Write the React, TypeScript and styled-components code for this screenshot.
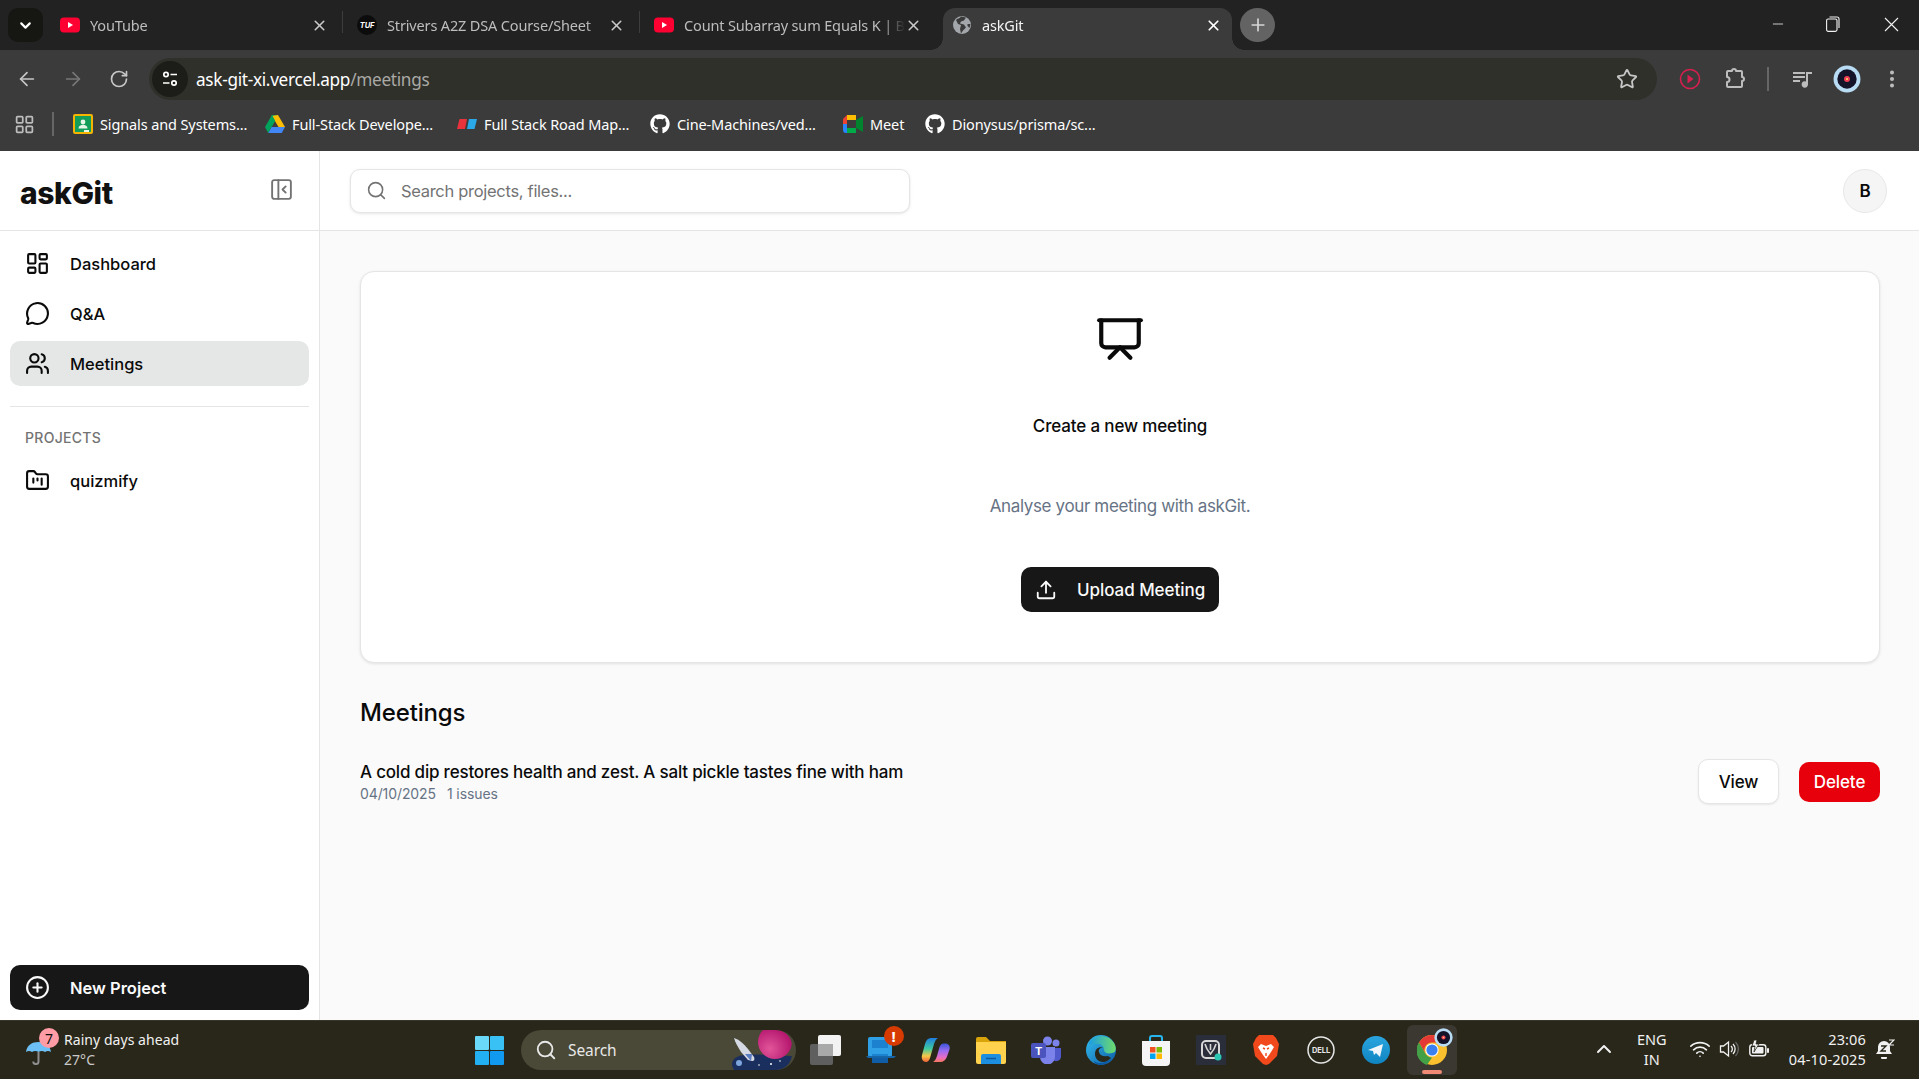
import React from 'react';
import styled, { createGlobalStyle } from 'styled-components';
import {
  ArrowLeft, ArrowRight, RotateCw, X, Plus, ChevronDown, ChevronUp, LayoutGrid, Star,
  MoreVertical, Minus, LayoutDashboard, MessageCircle, Users, FolderKanban, PanelLeftClose, Search as SearchIcon,
  Presentation, Upload, CirclePlus, Wifi,
} from 'lucide-react';
import { FaGithub } from 'react-icons/fa';

const Global = createGlobalStyle`
  html, body { margin: 0; padding: 0; height: 100%; overflow: hidden; }
  * { box-sizing: border-box; }
  #root { height: 100%; }
`;

const chromeFont = `"Noto Sans", "Open Sans", sans-serif`;

const Shell = styled.div`
  display: flex; flex-direction: column; width: 100%; height: 100vh;
  font-family: Inter, "Noto Sans", sans-serif; color: #0a0a0a;
`;

/* ---------- browser chrome ---------- */
const TabStrip = styled.div`
  flex: none; height: 50px; background: #222222; display: flex; align-items: flex-end; padding-left: 8px;
  font-family: ${chromeFont};
`;
const TabListButton = styled.div`
  flex: none; width: 35px; height: 34px; margin: 0 3px 8px 0; border-radius: 10px; background: #161613;
  display: flex; align-items: center; justify-content: center; color: #fff;
`;
const Tab = styled.div<{ $active?: boolean }>`
  flex: none; height: 42px; display: flex; align-items: center; font-size: 14.5px; letter-spacing: -0.15px; position: relative;
  width: ${p => (p.$active ? '289px' : '296px')};
  margin-left: ${p => (p.$active ? '7px' : '0')};
  padding: ${p => (p.$active ? '0 10px 8px 9px' : '0 14px 8px')};
  color: ${p => (p.$active ? '#f4f4f4' : '#bdbdbd')};
  background: ${p => (p.$active ? '#3b3b3b' : 'transparent')};
  border-radius: 12px 12px 0 0;
  svg.close { color: ${p => (p.$active ? '#fff' : '#c9c9c9')}; flex: none; }
  ${p => p.$active && `
    &::before, &::after { content: ''; position: absolute; bottom: 0; width: 12px; height: 12px; }
    &::before { left: -12px; background: radial-gradient(circle at 0 0, transparent 11.5px, #3b3b3b 12px); }
    &::after { right: -12px; background: radial-gradient(circle at 100% 0, transparent 11.5px, #3b3b3b 12px); }
  `}
`;
const TabTitle = styled.span`
  flex: 1; min-width: 0; margin-left: 10px; white-space: nowrap; overflow: hidden;
  -webkit-mask-image: linear-gradient(90deg, #000 90%, transparent 100%);
  mask-image: linear-gradient(90deg, #000 90%, transparent 100%);
`;
const TabSeparator = styled.div`
  flex: none; width: 1px; height: 22px; margin-bottom: 17px; background: #3d3d3d;
`;
const NewTab = styled.div`
  flex: none; width: 35px; height: 34px; margin: 0 0 8px 8px; border-radius: 50%; background: #636363;
  display: flex; align-items: center; justify-content: center; color: #d6d6d6;
`;
const WindowControls = styled.div`
  margin-left: auto; display: flex; height: 50px; color: #f2f2f2;
`;
const WindowButton = styled.div<{ $close?: boolean }>`
  width: 55.5px; display: flex; align-items: center; justify-content: center; padding-bottom: 2px;
  margin-left: ${p => (p.$close ? '2.5px' : '0')};
`;
const Toolbar = styled.div`
  flex: none; height: 50px; padding-top: 8px; background: #3b3b3b; display: flex;
  align-items: stretch; padding-left: 4px; font-family: ${chromeFont};
`;
const NavButton = styled.div<{ $dim?: boolean }>`
  flex: none; width: 46px; display: flex; align-items: center; justify-content: center;
  color: ${p => (p.$dim ? '#787878' : '#c7c7c7')};
`;
const Omnibox = styled.div`
  flex: none; width: 1508px; margin: 0 10px 0 7px; height: 42px; background: #30302b; border-radius: 21px;
  display: flex; align-items: center; padding: 0 19px 0 3px;
`;
const SiteChip = styled.div`
  flex: none; width: 36px; height: 36px; border-radius: 50%; background: #1c1c18;
  display: flex; align-items: center; justify-content: center;
`;
const Url = styled.span`
  margin-left: 8px; font-size: 17.2px; letter-spacing: -0.3px; color: #fff; white-space: nowrap;
  span { color: #a9a9a5; }
`;
const UrlStar = styled.div`
  margin-left: auto; display: flex; color: #c7c7c7;
`;
const ToolButton = styled.div`
  flex: none; width: 45px; height: 42px; display: flex; align-items: center; justify-content: center; color: #bdbdbd;
`;
const ToolSeparator = styled.div`
  flex: none; width: 22px; height: 42px; display: flex; align-items: center; justify-content: center;
  &::before { content: ''; width: 2px; height: 24px; background: #666; }
`;
const BookmarkBar = styled.div`
  flex: none; height: 51px; background: #3b3b3b; display: flex; align-items: center; padding: 0 0 3px 14px;
  font-family: ${chromeFont}; font-size: 14.5px; letter-spacing: -0.12px; color: #fff;
`;
const AppsButton = styled.div`
  flex: none; display: flex; width: 21px; color: #bdbdbd;
`;
const BarDivider = styled.div`
  flex: none; width: 2px; height: 24px; background: #666; margin: 0 19px 0 17px;
`;
const Bookmark = styled.div<{ $width: number }>`
  flex: none; width: ${p => p.$width}px; display: flex; align-items: center; gap: 7px; white-space: nowrap;
`;
const Favicon = styled.svg`
  flex: none; display: block;
`;

/* ---------- app ---------- */
const Main = styled.div`
  flex: 1; min-height: 0; display: flex; background: #fff;
`;
const Sidebar = styled.aside`
  flex: none; width: 320px; display: flex; flex-direction: column; background: #fff; border-right: 1px solid #e5e5e5;
`;
const SidebarHeader = styled.div`
  flex: none; height: 80px; border-bottom: 1px solid #e5e5e5; display: flex; align-items: center;
  justify-content: space-between; padding: 0 24px 0 20px;
`;
const Logo = styled.div`
  font-size: 30px; font-weight: 800; letter-spacing: -0.4px; color: #111; padding-top: 4px;
`;
const CollapseButton = styled.div`
  display: flex; color: #737373; margin-right: 1px; margin-top: -3px;
`;
const NavList = styled.nav`
  display: flex; flex-direction: column; gap: 5px; padding: 10px 10px 0;
`;
const NavItem = styled.div<{ $active?: boolean }>`
  height: 45px; border-radius: 10px; display: flex; align-items: center; gap: 20px; padding-left: 15px;
  font-size: 16.5px; font-weight: 500; color: #0a0a0a;
  background: ${p => (p.$active ? '#e5e6e6' : 'transparent')};
`;
const SideDivider = styled.div`
  height: 1px; background: #e5e5e5; margin: 20px 10px 0;
`;
const SectionLabel = styled.div`
  margin: 20px 0 0 25px; height: 21px; line-height: 21px; font-size: 14px; font-weight: 500; letter-spacing: 0.3px; color: #737373;
`;
const ProjectList = styled.div`
  padding: 10px 10px 0;
`;
const NewProject = styled.button`
  margin: auto 10px 10px; height: 45px; border: 0; border-radius: 10px; background: #171717; color: #fafafa;
  display: flex; align-items: center; gap: 20px; padding: 0 0 0 15px; font: 600 16.5px Inter, sans-serif; letter-spacing: 0;
`;
const Page = styled.div`
  flex: 1; min-width: 0; display: flex; flex-direction: column; background: #fafafa;
`;
const PageHeader = styled.header`
  flex: none; height: 80px; background: #fff; border-bottom: 1px solid #e5e5e5; display: flex; align-items: center;
  justify-content: space-between; padding: 0 32px 0 30px;
`;
const SearchBox = styled.div`
  width: 560px; height: 44px; border: 1px solid #e5e5e5; border-radius: 10px; background: #fff;
  box-shadow: 0 1px 3px rgba(0,0,0,.1); display: flex; align-items: center; gap: 14px; padding-left: 15px;
  color: #737373; font-size: 16.5px; letter-spacing: -0.3px;
`;
const Avatar = styled.div`
  width: 44px; height: 44px; border-radius: 50%; background: #f5f5f5; border: 1px solid #e8e8e8;
  display: flex; align-items: center; justify-content: center; font-size: 17px; font-weight: 600;
`;
const Content = styled.main`
  flex: 1; padding: 40px 39px 0 40px;
`;
const UploadCard = styled.section`
  height: 392px; border: 1px solid #e5e5e5; border-radius: 14px; background: #fff; box-shadow: 0 1px 3px rgba(0,0,0,.1);
  display: flex; flex-direction: column; align-items: center; padding-top: 42px;
`;
const CardTitle = styled.h2`
  margin: 51px 0 0; font-size: 17px; line-height: 22px; font-weight: 500; letter-spacing: -0.15px;
`;
const CardText = styled.p`
  margin: 58px 0 0; font-size: 17px; line-height: 22px; font-weight: 400; color: #667385; letter-spacing: -0.36px;
`;
const UploadButton = styled.button`
  margin-top: 50px; width: 198px; height: 45px; border: 0; border-radius: 10px; background: #171717; color: #fafafa;
  display: flex; align-items: center; gap: 20px; padding: 0 0 0 14px; font: 500 17px Inter, sans-serif; letter-spacing: -0.05px;
`;
const SectionTitle = styled.h1`
  margin: 34px 0 0; font-size: 24px; line-height: 32px; font-weight: 500; letter-spacing: -0.15px;
`;
const MeetingRow = styled.div`
  margin-top: 30px; display: flex; justify-content: space-between; align-items: flex-start;
`;
const MeetingInfo = styled.div`
  padding-top: 2px;
`;
const MeetingTitle = styled.div`
  font-size: 17px; line-height: 22px; font-weight: 500; letter-spacing: -0.2px;
`;
const MeetingMeta = styled.div`
  display: flex; gap: 11px; font-size: 14px; line-height: 22px; color: #667385; letter-spacing: -0.1px;
`;
const Actions = styled.div`
  display: flex; align-items: center; gap: 20px;
`;
const ActionButton = styled.button<{ $danger?: boolean }>`
  border-radius: 10px; font: 500 17px Inter, sans-serif; letter-spacing: -0.1px;
  width: ${p => (p.$danger ? '81px' : '81px')};
  height: ${p => (p.$danger ? '40px' : '45px')};
  color: ${p => (p.$danger ? '#fff' : '#0a0a0a')};
  background: ${p => (p.$danger ? '#e7000b' : '#fff')};
  border: ${p => (p.$danger ? '0' : '1px solid #e5e5e5')};
  box-shadow: ${p => (p.$danger ? 'none' : '0 1px 2px rgba(0,0,0,.08)')};
`;

/* ---------- taskbar ---------- */
const Taskbar = styled.footer`
  flex: none; height: 59px; background: #29271a; border-top: 1px solid #38362a; display: flex; align-items: center;
  font-family: ${chromeFont}; color: #f1f1f1; font-size: 14px; letter-spacing: -0.1px;
`;
const Weather = styled.div`
  flex: none; width: 462px; display: flex; align-items: center; padding-left: 26px; position: relative;
`;
const WeatherBadge = styled.span`
  position: absolute; left: 39px; top: -2px; width: 20px; height: 20px; border-radius: 50%; background: #ff9ca6; color: #111;
  display: flex; align-items: center; justify-content: center; font-size: 14px;
`;
const WeatherText = styled.div`
  margin-left: 13px; line-height: 20px; font-size: 14px; letter-spacing: 0.05px;
  small { display: block; font-size: 14px; color: #c9c9c9; }
`;
const UmbrellaSlot = styled.div`
  flex: none; display: flex; margin-top: 5px;
`;
const TaskIcon = styled.div<{ $active?: boolean }>`
  flex: none; width: 55px; height: 50px; display: flex; align-items: center; justify-content: center; position: relative;
  ${p => p.$active && 'background: #3a3830; border-radius: 6px; width: 50px; margin: 0 2px 0 3px;'}
`;
const ActivePill = styled.span`
  position: absolute; left: 15px; bottom: 1px; width: 20px; height: 4px; border-radius: 2px; background: #f08a74;
`;
const AlertBadge = styled.span`
  position: absolute; left: 30px; top: 1px; width: 20px; height: 20px; border-radius: 50%; background: #d83b01; color: #fff;
  display: flex; align-items: center; justify-content: center; font-size: 15px; font-weight: 700;
`;
const TaskSearch = styled.div`
  flex: none; width: 275px; height: 40px; margin: 0 2.5px 0 4px; border-radius: 20px; background: #4a4836; display: flex; align-items: center;
  padding: 0 4px 0 14px; gap: 11px; font-size: 15.5px; color: #e8e8e8; overflow: hidden;
`;
const SearchArt = styled.svg`
  margin-left: auto; flex: none; display: block; border-radius: 0 16px 16px 0;
`;
const Tray = styled.div`
  margin-left: auto; display: flex; align-items: center; padding: 0 24px 2px 0; font-size: 14.5px;
`;
const LangBlock = styled.div`
  margin-left: 20px; width: 32px; text-align: center; line-height: 20px; letter-spacing: 0;
`;
const TrayIcon = styled.div<{ $gap: number }>`
  margin-left: ${p => p.$gap}px; display: flex;
`;
const Clock = styled.div`
  margin-left: 20px; text-align: right; line-height: 20px; letter-spacing: 0.15px; white-space: nowrap;
`;

/* ---------- drawings ---------- */
const YouTubeIcon = () => (
  <Favicon width="20" height="16" viewBox="0 0 20 16"><rect y="0.5" width="20" height="15" rx="4" fill="#ff0033" /><path d="M8 5l5 3-5 3z" fill="#fff" /></Favicon>
);
const TufIcon = () => (
  <Favicon width="20" height="20" viewBox="0 0 20 20"><circle cx="10" cy="10" r="10" fill="#0c0c0c" /><text x="10" y="12.5" textAnchor="middle" fontSize="7.5" fontStyle="italic" fontWeight="700" fill="#fff" fontFamily="Inter">TUF</text></Favicon>
);
const GlobeIcon = () => (
  <Favicon width="20" height="20" viewBox="0 0 20 20"><circle cx="10" cy="10" r="9" fill="#a3a7ab" /><path d="M9 1.5c-1 2-4 2-5 3.5l2 4 3 1-1 4 1 4.5 2-3 3-3-2-3-4-1 1-2 3-1 2-3zM15.5 9l3 0-1 4-2-2z" fill="#3b3b3b" /></Favicon>
);
const SiteInfoIcon = () => (
  <Favicon width="20" height="20" viewBox="0 0 20 20" fill="none" stroke="#fff" strokeWidth="1.7"><circle cx="6" cy="5.5" r="2.2" /><path d="M10.5 5.5H17M3 14h6.5" /><circle cx="14" cy="14" r="2.2" /></Favicon>
);
const ClassroomIcon = () => (
  <Favicon width="20" height="20" viewBox="0 0 20 20"><rect width="20" height="20" rx="2" fill="#f4b400" /><rect x="2" y="2" width="16" height="16" fill="#129d58" /><circle cx="10" cy="8" r="2.4" fill="#e8f5e9" /><path d="M5.5 14.5c0-5 9-5 9 0z" fill="#e8f5e9" /><path d="M11 16h5v2h-5z" fill="#e8f5e9" /></Favicon>
);
const DriveIcon = () => (
  <Favicon width="20" height="18" viewBox="0 0 20 18"><path d="M7 0h6l-3 6-3 5.5L4 6z" fill="#0f9d58" /><path d="M13 0l7 12h-6.5L7 1z" fill="#fbbc04" /><path d="M20 12l-3.2 6H3.2l3.3-6z" fill="#4285f4" /><path d="M7 0l3 5.5L3.2 18 0 12z" fill="#00a35c" /></Favicon>
);
const RoadmapIcon = () => (
  <Favicon width="20" height="10" viewBox="0 0 20 10"><path d="M2.5 0H10L8 10H0z" fill="#e8323c" /><path d="M12 0h8l-2.5 10H10z" fill="#2ba8e8" /></Favicon>
);
const MeetIcon = () => (
  <Favicon width="20" height="18" viewBox="0 0 20 18"><path d="M4 0h9v5H4v4H0V4z" fill="#ea4335" /><path d="M0 9h4v4h9v5H3a3 3 0 0 1-3-3z" fill="#2684fc" /><path d="M4 0h9v5H4z" fill="#fbbc04" /><path d="M13 13H4v5h9z" fill="#00ac47" /><path d="M13 5v8l7 4V1z" fill="#00832d" /><path d="M4 5h9v8H4z" fill="#3b3b3b" /></Favicon>
);
const GitHubIcon = () => <FaGithub size={20} color="#fff" />;
const PlayRingIcon = () => (
  <Favicon width="22" height="22" viewBox="0 0 22 22" fill="none"><circle cx="11" cy="11" r="9.5" stroke="#d81f4f" strokeWidth="1.6" /><path d="M8.5 6.5l6 4.5-6 4.5z" fill="#d81f4f" /></Favicon>
);
const ExtensionIcon = () => (
  <Favicon width="24" height="24" viewBox="0 0 24 24" fill="none" stroke="#bdbdbd" strokeWidth="2" strokeLinejoin="round"><path d="M9 4a2 2 0 0 1 4 0h5a1 1 0 0 1 1 1v5a2 2 0 0 1 0 4v5a1 1 0 0 1-1 1H5a1 1 0 0 1-1-1v-4a2.5 2.5 0 0 0 0-5V5a1 1 0 0 1 1-1z" /></Favicon>
);
const MediaIcon = () => (
  <Favicon width="24" height="24" viewBox="0 0 24 24" fill="#bdbdbd"><path d="M3 5h12v2H3zM3 9h12v2H3zM3 13h7v2H3z" /><path d="M16 5h6v2h-4v10.5a3.2 3.2 0 1 1-2-3z" /></Favicon>
);
const ProfileIcon = ({ size = 28 }: { size?: number }) => (
  <Favicon width={size} height={size} viewBox="0 0 26 26"><circle cx="13" cy="13" r="12.5" fill="#b9dcf5" /><circle cx="13" cy="13" r="9" fill="#15132a" /><circle cx="13" cy="13" r="2.8" fill="#ef3e55" /><circle cx="13" cy="13" r="1" fill="#ffd166" /></Favicon>
);
const RestoreIcon = () => (
  <Favicon width="14" height="16" viewBox="0 0 14 16" fill="none" stroke="#f2f2f2" strokeWidth="1.1"><rect x="0.6" y="3" width="10.4" height="12.4" rx="1.6" /><path d="M3.5 1h7.5a2 2 0 0 1 2 2v9" /></Favicon>
);
const ThinClose = () => (
  <Favicon width="15" height="15" viewBox="0 0 15 15" stroke="#f2f2f2" strokeWidth="1.1"><path d="M1 1l13 13M14 1L1 14" /></Favicon>
);
const UmbrellaIcon = () => (
  <Favicon width="25" height="24" viewBox="0 0 25 24"><path d="M0 11C1 4 6 1 12.5 1S24 4 25 11c-2-1.5-4-1.5-6 0-2-1.5-4.5-1.5-6.5 0-2-1.5-4.5-1.5-6.5 0-2-1.5-4-1.5-6 0z" fill="#6cc0f5" /><path d="M12.5 11v9.5a2.6 2.6 0 0 1-5.2 0" fill="none" stroke="#8d8d8d" strokeWidth="2" /></Favicon>
);
const WindowsLogo = () => (
  <Favicon width="29" height="29" viewBox="0 0 29 29"><rect width="14" height="14" rx="1" fill="#6ad8f8" /><rect x="15" width="14" height="14" rx="1" fill="#39c0f5" /><rect y="15" width="14" height="14" rx="1" fill="#23b0f3" /><rect x="15" y="15" width="14" height="14" rx="1" fill="#1099ef" /></Favicon>
);
const SearchArtIcon = () => (
  <SearchArt width="62" height="40" viewBox="0 0 62 40">
    <defs><radialGradient id="pl" cx=".35" cy=".7" r=".9"><stop offset="0" stopColor="#e2559a" /><stop offset=".7" stopColor="#b5176e" /><stop offset="1" stopColor="#8c1458" /></radialGradient></defs>
    <path d="M4 40c-5-8 0-14 10-15 14-1 30 0 48 1v14z" fill="#1b2f5f" />
    <circle cx="45" cy="12" r="17" fill="url(#pl)" />
    <path d="M4 8c6 2 10 6 14 11l6 8c1 3 0 4-2 4l-4-1-7-8C8 17 5 12 4 8z" fill="#d5d9e3" />
    <path d="M15 24l6 7 1-7z" fill="#5a7cc0" />
    <circle cx="9" cy="33" r="3" fill="#7ea6dc" />
    <circle cx="41" cy="34" r="1" fill="#fff" /><circle cx="50" cy="31" r="0.8" fill="#fff" /><circle cx="29" cy="35" r="0.8" fill="#fff" />
  </SearchArt>
);
const TaskViewIcon = () => (
  <Favicon width="32" height="30" viewBox="0 0 32 30"><rect y="9" width="23" height="21" rx="2" fill="#5f5f5f" /><rect x="8" y="0" width="23" height="21" rx="2" fill="#f3f3f3" /><rect x="8" y="9" width="15" height="12" fill="#a9a9a9" /></Favicon>
);
const WidgetsIcon = () => (
  <Favicon width="30" height="28" viewBox="0 0 30 28"><rect x="2" y="1" width="24" height="20" rx="2" fill="#2f9fe6" /><path d="M6 4h16v20a2 2 0 0 1-2 2H8a2 2 0 0 1-2-2z" fill="#1c82d0" /><path d="M6 12h16v6H6z" fill="#2f9fe6" /><path d="M0 20h30l-2 2H2z" fill="#1565a8" /><path d="M6 22h16v5H6z" fill="#0f5da6" /></Favicon>
);
const CopilotIcon = () => (
  <Favicon width="30" height="30" viewBox="0 0 30 30"><defs><linearGradient id="c1" x1="0" y1="0" x2="0" y2="1"><stop offset="0" stopColor="#1f7ee0" /><stop offset=".45" stopColor="#3fc9a0" /><stop offset=".75" stopColor="#f7c948" /><stop offset="1" stopColor="#f0603c" /></linearGradient><linearGradient id="c2" x1="0" y1="0" x2="0" y2="1"><stop offset="0" stopColor="#3a55d8" /><stop offset=".4" stopColor="#9a6cf0" /><stop offset=".75" stopColor="#e86cc4" /><stop offset="1" stopColor="#f7785c" /></linearGradient></defs><path d="M10 3h7c-2 1-3 3-4 6l-4 14c-.5 2-2 4-4 4-3 0-5-3-4-7l3-11c1-4 3-6 6-6z" fill="url(#c1)" /><path d="M19 27h-7c2-1 3-3 4-6l2.5-9c1-2 2-3.5 4-3.5h2c3 0 5 2.5 4 6l-2.5 7c-1 3.500-3.500 5.500-7 5.500z" fill="url(#c2)" /></Favicon>
);
const ExplorerIcon = () => (
  <Favicon width="30" height="28" viewBox="0 0 30 28"><path d="M0 3a2 2 0 0 1 2-2h8l4 4h16v4H0z" fill="#d9a40a" /><path d="M0 6h30v20a2 2 0 0 1-2 2H2a2 2 0 0 1-2-2z" fill="#ffd24d" /><path d="M5 20a2 2 0 0 1 2-2h16a2 2 0 0 1 2 2v8H5z" fill="#1d8fe1" /><path d="M10 22.500h10" stroke="#0c5a9c" strokeWidth="1.5" /></Favicon>
);
const TeamsIcon = () => (
  <Favicon width="30" height="28" viewBox="0 0 30 28"><circle cx="25" cy="7" r="3.5" fill="#7b83eb" /><circle cx="16.5" cy="5" r="4.5" fill="#7b83eb" /><path d="M21 12h9v9a5 5 0 0 1-9 2z" fill="#5059c9" /><path d="M9 11h15v10a7 7 0 0 1-15 0z" fill="#7b83eb" /><rect y="7" width="15" height="15" rx="2" fill="#4b53bc" /><text x="7.5" y="18.5" textAnchor="middle" fontSize="11" fontWeight="700" fill="#fff" fontFamily="Inter">T</text></Favicon>
);
const EdgeIcon = () => (
  <Favicon width="30" height="30" viewBox="0 0 30 30"><defs><linearGradient id="e1" x1="0" y1="0" x2="1" y2="1"><stop offset="0" stopColor="#35c1f1" /><stop offset="1" stopColor="#0c59a4" /></linearGradient><linearGradient id="e2" x1="0" y1="0" x2="1" y2="0"><stop offset="0" stopColor="#1b9de2" /><stop offset="1" stopColor="#6fdc6a" /></linearGradient></defs><circle cx="15" cy="15" r="15" fill="url(#e1)" /><path d="M3 8C7 0 22-2 28 8c3 5 2 10-2 10-4 1-8 0-8-3 0-4-4-7-8-6-4 0-6 2-7-1z" fill="url(#e2)" /><path d="M22 21c-4 1-8 0-9-4-1-3 2-5 5-4-5-2-9 1-9 6 0 4 3 8 8 8 3 0 6-2 8-4z" fill="#29271a" /><path d="M26 24c-3 3-7 6-11 6-4 0-7-2-7-4 3 3 10 3 18-2z" fill="#0c59a4" /></Favicon>
);
const StoreIcon = () => (
  <Favicon width="30" height="31" viewBox="0 0 30 31"><path d="M9 7V3a2 2 0 0 1 2-2h8a2 2 0 0 1 2 2v4" fill="none" stroke="#27b5ee" strokeWidth="2" /><path d="M1 6h28v21a4 4 0 0 1-4 4H5a4 4 0 0 1-4-4z" fill="#f5f5f5" /><rect x="9" y="12" width="5.5" height="5.5" fill="#f25022" /><rect x="15.5" y="12" width="5.5" height="5.5" fill="#7fba00" /><rect x="9" y="18.5" width="5.5" height="5.5" fill="#00a4ef" /><rect x="15.5" y="18.5" width="5.5" height="5.5" fill="#ffb900" /></Favicon>
);
const SaavnIcon = () => (
  <Favicon width="30" height="30" viewBox="0 0 30 30"><rect width="30" height="30" fill="#2a2d3a" /><rect x="6" y="6" width="17" height="17" rx="4" fill="none" stroke="#d6d6d6" strokeWidth="2" /><path d="M9 9c1 4 3 7 5.500 10C17 16 19 13 20 9M14.500 9v6" fill="none" stroke="#d6d6d6" strokeWidth="1.6" /><circle cx="22" cy="22" r="3.500" fill="#2bc5b4" /></Favicon>
);
const BraveIcon = () => (
  <Favicon width="26" height="30" viewBox="0 0 26 30"><path d="M6 0h14l3 3 3 6-2 12-8 8-3 1-3-1-8-8L0 9l3-6z" fill="#f1481c" /><path d="M8 9l5 2 5-2 3 3-3 5-2 3-3 4-3-4-2-3-3-5z" fill="#fff" /><path d="M10 13l2 1M16 13l-2 1M13 18v3" stroke="#f1481c" strokeWidth="1.4" /></Favicon>
);
const DellIcon = () => (
  <Favicon width="28" height="28" viewBox="0 0 28 28"><circle cx="14" cy="14" r="13" fill="none" stroke="#e6e6e6" strokeWidth="1.5" /><text x="14" y="16.5" textAnchor="middle" fontSize="7.5" fontWeight="700" fill="#e6e6e6" fontFamily="Inter">DELL</text></Favicon>
);
const TelegramIcon = () => (
  <Favicon width="28" height="28" viewBox="0 0 28 28"><defs><linearGradient id="t1" x1="0" y1="0" x2="0" y2="1"><stop offset="0" stopColor="#2aa5e0" /><stop offset="1" stopColor="#0f84c0" /></linearGradient></defs><circle cx="14" cy="14" r="14" fill="url(#t1)" /><path d="M6 14l15-6-3 13-4-4-2 2-1-4z" fill="#f0f6fb" /></Favicon>
);
const ChromeIcon = () => (
  <Favicon width="30" height="30" viewBox="0 0 30 30"><circle cx="15" cy="15" r="15" fill="#fbc02d" /><path d="M15 0a15 15 0 0 1 13 7.5H15a7.5 7.5 0 0 0-6.5 11.3L2 7.5A15 15 0 0 1 15 0z" fill="#e53935" /><path d="M2 7.5l6.5 11.3A7.5 7.5 0 0 0 15 22.5L10 30A15 15 0 0 1 2 7.5z" fill="#43a047" /><circle cx="15" cy="15" r="6.6" fill="#fff" /><circle cx="15" cy="15" r="5.6" fill="#3a80f0" /></Favicon>
);
const ChromeOverlay = styled.span`
  position: absolute; left: 27px; top: 3px; display: flex;
`;
const VolumeIcon = () => (
  <Favicon width="20" height="20" viewBox="0 0 20 20" fill="none" stroke="#f1f1f1" strokeWidth="1.3"><path d="M1.5 7v6h3l5 4V3l-5 4z" /><path d="M12 7a4 4 0 0 1 0 6M14 5a7 7 0 0 1 0 10" /><path d="M16.5 3a10 10 0 0 1 0 14" stroke="#666" /></Favicon>
);
const BatteryIcon = () => (
  <Favicon width="20" height="18" viewBox="0 0 20 18"><rect x="0.8" y="4.8" width="16" height="11" rx="2.5" fill="none" stroke="#f1f1f1" strokeWidth="1.4" /><rect x="3" y="7" width="11.5" height="6.6" rx="1" fill="#f1f1f1" /><rect x="18" y="8" width="2" height="5" rx="1" fill="#f1f1f1" /><path d="M5 0l-2 6h3l-1 6 5-8H7l1-4z" fill="#f1f1f1" stroke="#29271a" strokeWidth="0.8" /></Favicon>
);
const BellIcon = () => (
  <Favicon width="20" height="20" viewBox="0 0 20 20"><path d="M9 2a6 6 0 0 0-6 6v4l-2 3h16l-2-3V8a6 6 0 0 0-6-6z" fill="#f1f1f1" /><path d="M6 18h6a3 3 0 0 1-6 0z" fill="#f1f1f1" /><path d="M6 7h5l-5 5h5" fill="none" stroke="#29271a" strokeWidth="1.4" /><path d="M14 1h5l-5 5h5" fill="none" stroke="#f1f1f1" strokeWidth="1.2" /></Favicon>
);

export default function App() {
  return (
    <Shell>
      <Global />
      <TabStrip>
        <TabListButton><ChevronDown size={17} strokeWidth={3} /></TabListButton>
        <Tab><YouTubeIcon /><TabTitle>YouTube</TabTitle><X className="close" size={17} strokeWidth={2.2} /></Tab>
        <TabSeparator />
        <Tab><TufIcon /><TabTitle>Strivers A2Z DSA Course/Sheet</TabTitle><X className="close" size={17} strokeWidth={2.2} /></Tab>
        <TabSeparator />
        <Tab><YouTubeIcon /><TabTitle>Count Subarray sum Equals K | B</TabTitle><X className="close" size={17} strokeWidth={2.2} /></Tab>
        <Tab $active><GlobeIcon /><TabTitle>askGit</TabTitle><X className="close" size={17} strokeWidth={2.4} /></Tab>
        <NewTab><Plus size={20} strokeWidth={2} /></NewTab>
        <WindowControls>
          <WindowButton><Minus size={16} strokeWidth={1.2} /></WindowButton>
          <WindowButton><RestoreIcon /></WindowButton>
          <WindowButton $close><ThinClose /></WindowButton>
        </WindowControls>
      </TabStrip>

      <Toolbar>
        <NavButton><ArrowLeft size={22} strokeWidth={1.8} /></NavButton>
        <NavButton $dim><ArrowRight size={22} strokeWidth={1.8} /></NavButton>
        <NavButton><RotateCw size={20} strokeWidth={2} /></NavButton>
        <Omnibox>
          <SiteChip><SiteInfoIcon /></SiteChip>
          <Url>ask-git-xi.vercel.app<span>/meetings</span></Url>
          <UrlStar><Star size={22} strokeWidth={2} /></UrlStar>
        </Omnibox>
        <ToolButton><PlayRingIcon /></ToolButton>
        <ToolButton><ExtensionIcon /></ToolButton>
        <ToolSeparator />
        <ToolButton><MediaIcon /></ToolButton>
        <ToolButton><ProfileIcon /></ToolButton>
        <ToolButton><MoreVertical size={22} strokeWidth={2.4} /></ToolButton>
      </Toolbar>

      <BookmarkBar>
        <AppsButton><LayoutGrid size={21} strokeWidth={2} /></AppsButton>
        <BarDivider />
        <Bookmark $width={192}><ClassroomIcon />Signals and Systems...</Bookmark>
        <Bookmark $width={192}><DriveIcon />Full-Stack Develope...</Bookmark>
        <Bookmark $width={193}><RoadmapIcon />Full Stack Road Map...</Bookmark>
        <Bookmark $width={193}><GitHubIcon />Cine-Machines/ved...</Bookmark>
        <Bookmark $width={82}><MeetIcon />Meet</Bookmark>
        <Bookmark $width={200}><GitHubIcon />Dionysus/prisma/sc...</Bookmark>
      </BookmarkBar>

      <Main>
        <Sidebar>
          <SidebarHeader>
            <Logo>askGit</Logo>
            <CollapseButton><PanelLeftClose size={25} strokeWidth={1.8} /></CollapseButton>
          </SidebarHeader>
          <NavList>
            <NavItem><LayoutDashboard size={25} strokeWidth={2} />Dashboard</NavItem>
            <NavItem><MessageCircle size={25} strokeWidth={2} />Q&amp;A</NavItem>
            <NavItem $active><Users size={25} strokeWidth={2} />Meetings</NavItem>
          </NavList>
          <SideDivider />
          <SectionLabel>PROJECTS</SectionLabel>
          <ProjectList>
            <NavItem><FolderKanban size={25} strokeWidth={2} />quizmify</NavItem>
          </ProjectList>
          <NewProject><CirclePlus size={25} strokeWidth={2} />New Project</NewProject>
        </Sidebar>

        <Page>
          <PageHeader>
            <SearchBox><SearchIcon size={21} strokeWidth={1.8} />Search projects, files...</SearchBox>
            <Avatar>B</Avatar>
          </PageHeader>
          <Content>
            <UploadCard>
              <Presentation size={50} strokeWidth={2} />
              <CardTitle>Create a new meeting</CardTitle>
              <CardText>Analyse your meeting with askGit.</CardText>
              <UploadButton><Upload size={22} strokeWidth={2} />Upload Meeting</UploadButton>
            </UploadCard>
            <SectionTitle>Meetings</SectionTitle>
            <MeetingRow>
              <MeetingInfo>
                <MeetingTitle>A cold dip restores health and zest. A salt pickle tastes fine with ham</MeetingTitle>
                <MeetingMeta><span>04/10/2025</span><span>1 issues</span></MeetingMeta>
              </MeetingInfo>
              <Actions>
                <ActionButton>View</ActionButton>
                <ActionButton $danger>Delete</ActionButton>
              </Actions>
            </MeetingRow>
          </Content>
        </Page>
      </Main>

      <Taskbar>
        <Weather>
          <UmbrellaSlot><UmbrellaIcon /></UmbrellaSlot>
          <WeatherBadge>7</WeatherBadge>
          <WeatherText>Rainy days ahead<small>27°C</small></WeatherText>
        </Weather>
        <TaskIcon><WindowsLogo /></TaskIcon>
        <TaskSearch>
          <SearchIcon size={22} strokeWidth={2} />Search
          <SearchArtIcon />
        </TaskSearch>
        <TaskIcon><TaskViewIcon /></TaskIcon>
        <TaskIcon><WidgetsIcon /><AlertBadge>!</AlertBadge></TaskIcon>
        <TaskIcon><CopilotIcon /></TaskIcon>
        <TaskIcon><ExplorerIcon /></TaskIcon>
        <TaskIcon><TeamsIcon /></TaskIcon>
        <TaskIcon><EdgeIcon /></TaskIcon>
        <TaskIcon><StoreIcon /></TaskIcon>
        <TaskIcon><SaavnIcon /></TaskIcon>
        <TaskIcon><BraveIcon /></TaskIcon>
        <TaskIcon><DellIcon /></TaskIcon>
        <TaskIcon><TelegramIcon /></TaskIcon>
        <TaskIcon $active>
          <ChromeIcon />
          <ChromeOverlay><ProfileIcon size={19} /></ChromeOverlay>
          <ActivePill />
        </TaskIcon>
        <Tray>
          <ChevronUp size={24} strokeWidth={2} />
          <LangBlock>ENG<br />IN</LangBlock>
          <TrayIcon $gap={21}><Wifi size={22} strokeWidth={1.8} /></TrayIcon>
          <TrayIcon $gap={8}><VolumeIcon /></TrayIcon>
          <TrayIcon $gap={10}><BatteryIcon /></TrayIcon>
          <Clock>23:06<br />04-10-2025</Clock>
          <TrayIcon $gap={9}><BellIcon /></TrayIcon>
        </Tray>
      </Taskbar>
    </Shell>
  );
}
